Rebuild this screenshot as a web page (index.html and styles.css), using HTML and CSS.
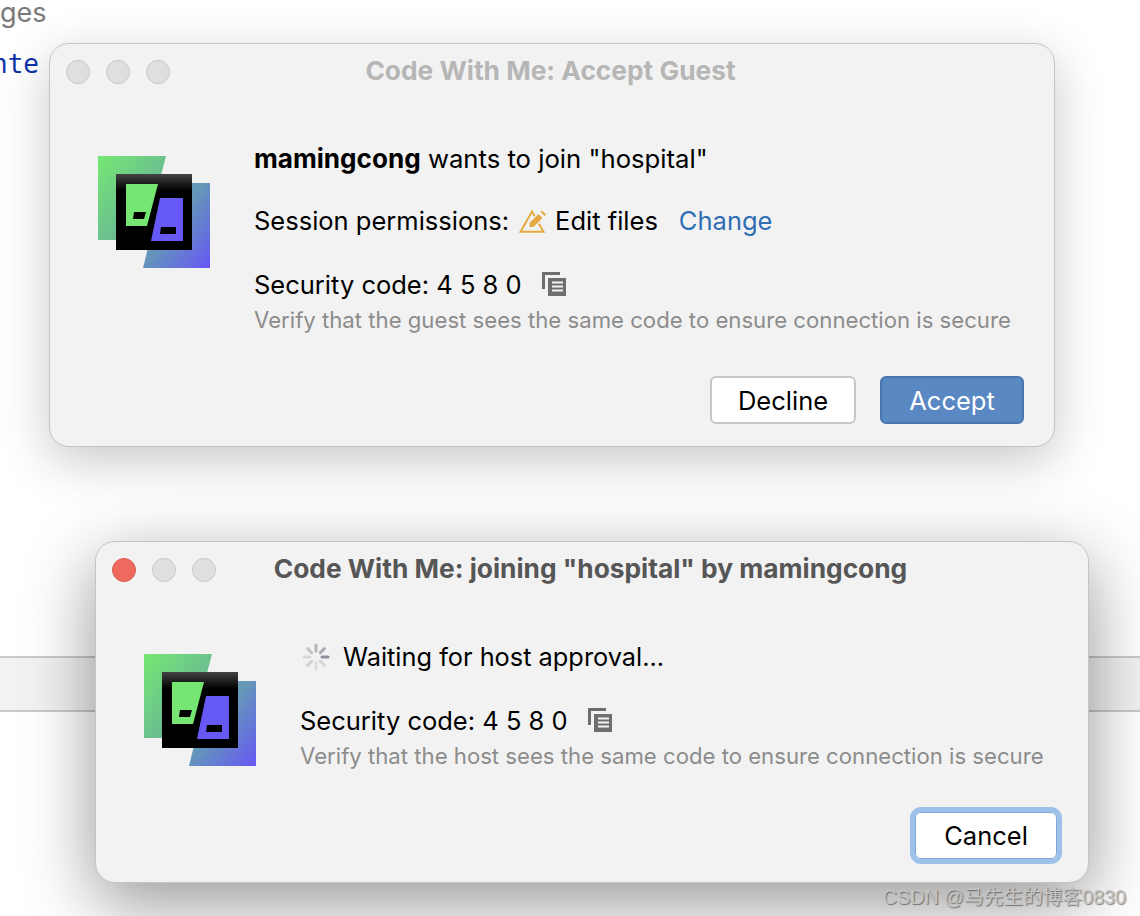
FILE: index.html
```html
<!DOCTYPE html>
<html lang="en">
<head>
  <meta charset="UTF-8" />
  <meta name="viewport" content="width=device-width, initial-scale=1" />
  <title>Code With Me</title>
  <link rel="stylesheet" href="styles.css">
</head>
<body>
  <svg width="0" height="0" class="defs">
    <defs>
      <linearGradient id="green-grad" x1="0" y1="0" x2="1" y2="1">
        <stop offset="0" stop-color="#76e873" />
        <stop offset="0.5" stop-color="#6cc48c" />
        <stop offset="1" stop-color="#5f9ea6" />
      </linearGradient>
      <linearGradient id="blue-grad" x1="0" y1="0" x2="1" y2="1">
        <stop offset="0" stop-color="#60a8a8" />
        <stop offset="0.45" stop-color="#6498b8" />
        <stop offset="1" stop-color="#6657f5" />
      </linearGradient>
      <linearGradient id="black-grad" x1="0" y1="0" x2="0" y2="1">
        <stop offset="0" stop-color="#444" />
        <stop offset="0.22" stop-color="#000" />
      </linearGradient>
      <symbol id="cwm-logo" viewBox="0 0 112 112">
        <polygon points="0,0 68,0 46,84 0,84" fill="url(#green-grad)" />
        <polygon points="66,27 112,27 112,112 45,112" fill="url(#blue-grad)" />
        <rect x="18" y="18" width="76" height="76" fill="url(#black-grad)" />
        <polygon points="28,28 60,28 49,70 28,70" fill="#76e673" />
        <polygon points="36,56 48,56 46,63 35,63" fill="#000" />
        <polygon points="62,42 85,42 85,85 53,85" fill="#6659f5" />
        <polygon points="63,71 78,71 78,78 62,78" fill="#000" />
      </symbol>
      <symbol id="copy-icon" viewBox="0 0 26 26">
        <path d="M1 1h18v3H4v14H1z" fill="#6e6e6e" />
        <path d="M7 7h18v18H7z" fill="#6e6e6e" />
        <path d="M11 11.500h11M11 15.500h11M11 19.500h11" stroke="#f2f2f2" stroke-width="2" fill="none" />
      </symbol>
    </defs>
  </svg>

  <div class="backdrop-text gray-text">ges</div>
  <div class="backdrop-text code-text"><span>nte</span></div>
  <div class="table-strip"></div>

  <!-- Accept dialog -->
  <section class="window window-accept">
    <div class="titlebar">
      <div class="lights">
        <span class="light"></span>
        <span class="light"></span>
        <span class="light"></span>
      </div>
      <div class="title title-inactive">Code With Me: Accept Guest</div>
    </div>
    <div class="window-body">
      <svg class="logo"><use href="#cwm-logo" /></svg>
      <div class="content">
        <p class="line first-line"><b>mamingcong</b> wants to join "hospital"</p>
        <p class="line perm-line">
          <span>Session permissions:</span>
          <svg class="edit-icon" viewBox="0 0 28 24" width="28" height="24">
            <path d="M1.500 22.800L13 2.500l11.500 20.300z" fill="none" stroke="#e5a93f" stroke-width="2" />
            <path d="M9 19.500v-6L20 3l6 5.500-11 11z" fill="#f2f2f2" />
            <path d="M10.500 18v-4L19.500 5l4 4-9 9z" fill="#e5a93f" />
            <path d="M21.500 3l1.500-1.500 4 4-1.500 1.500z" fill="#e5a93f" />
          </svg>
          <span>Edit files</span>
          <a class="link">Change</a>
        </p>
        <p class="line code-line">
          <span>Security code: 4 5 8 0</span>
          <svg class="copy"><use href="#copy-icon" /></svg>
        </p>
        <p class="hint">Verify that the guest sees the same code to ensure connection is secure</p>
      </div>
    </div>
    <div class="actions">
      <button class="btn">Decline</button>
      <button class="btn btn-primary">Accept</button>
    </div>
  </section>

  <!-- Joining dialog -->
  <section class="window window-join">
    <div class="titlebar">
      <div class="lights">
        <span class="light light-close"></span>
        <span class="light"></span>
        <span class="light"></span>
      </div>
      <div class="title">Code With Me: joining "hospital" by mamingcong</div>
    </div>
    <div class="window-body">
      <svg class="logo"><use href="#cwm-logo" /></svg>
      <div class="content">
        <p class="line wait-line">
          <svg class="spinner" viewBox="0 0 28 28" width="28" height="28">
            <g stroke-width="3" stroke-linecap="round" fill="none">
              <path d="M14 2v6" stroke="#b4b4bc" />
              <path d="M22.500 5.500l-4.200 4.200" stroke="#a8a8b2" />
              <path d="M26 14h-6" stroke="#8f8f9c" />
              <path d="M22.500 22.500l-4.200-4.200" stroke="#d4d4da" />
              <path d="M14 26v-6" stroke="#dcdce0" />
              <path d="M5.500 22.500l4.200-4.200" stroke="#d0d0d6" />
              <path d="M2 14h6" stroke="#d8d8dc" />
              <path d="M5.500 5.500l4.200 4.200" stroke="#c4c4ca" />
            </g>
          </svg>
          <span>Waiting for host approval...</span>
        </p>
        <p class="line code-line">
          <span>Security code: 4 5 8 0</span>
          <svg class="copy"><use href="#copy-icon" /></svg>
        </p>
        <p class="hint">Verify that the host sees the same code to ensure connection is secure</p>
      </div>
    </div>
    <div class="actions">
      <button class="btn btn-focus">Cancel</button>
    </div>
  </section>

  <div class="watermark">CSDN @马先生的博客0830</div>
</body>
</html>
```

FILE: styles.css
```css
html, body {
  margin: 0;
  height: 100%;
}

body {
  position: relative;
  width: 1140px;
  height: 916px;
  overflow: hidden;
  background: #fff;
  font-family: Inter, "Noto Sans", sans-serif;
  color: #000;
}

.defs {
  position: absolute;
}

/* bits of the editor behind the dialogs */
.backdrop-text {
  position: absolute;
  left: 0;
  white-space: nowrap;
}

.gray-text {
  top: -3px;
  font-size: 27px;
  line-height: 32px;
  color: #7a7a7a;
}

.code-text {
  top: 46px;
  width: 39px;
  display: flex;
  justify-content: flex-end;
  overflow: hidden;
  font-family: "DejaVu Sans Mono", monospace;
  font-size: 26px;
  line-height: 36px;
  color: #0b33a8;
}

.table-strip {
  position: absolute;
  left: 0;
  right: 0;
  top: 656px;
  height: 52px;
  background: #f2f2f2;
  border-top: 2px solid #c9c9c9;
  border-bottom: 2px solid #c9c9c9;
}

.window {
  position: absolute;
  display: flex;
  flex-direction: column;
  box-sizing: border-box;
  background: #f2f2f2;
  border: 1px solid #c4c4c4;
  border-radius: 20px;
}

.window-accept {
  left: 49px;
  top: 43px;
  width: 1006px;
  height: 404px;
  box-shadow: 0 14px 50px rgba(0, 0, 0, 0.22);
}

.window-join {
  left: 95px;
  top: 541px;
  width: 994px;
  height: 342px;
  box-shadow: 0 20px 70px rgba(0, 0, 0, 0.42);
}

.titlebar {
  position: relative;
  height: 54px;
  flex: none;
}

.lights {
  position: absolute;
  left: 16px;
  top: 16px;
  display: flex;
  gap: 16px;
}

.light {
  box-sizing: border-box;
  width: 24px;
  height: 24px;
  border-radius: 50%;
  background: #dfdfdf;
  border: 1px solid #c8c8c8;
}

.light-close {
  background: #ee6a5f;
  border-color: #d85a50;
}

.title {
  padding-right: 3px;
  text-align: center;
  font-size: 26.3px;
  font-weight: 700;
  line-height: 54px;
  color: #565656;
}

.title-inactive {
  color: #b6b6b6;
}

.window-body {
  display: flex;
  flex: 1;
  min-height: 0;
  padding: 58px 0 0 48px;
}

.logo {
  width: 112px;
  height: 112px;
  flex: none;
}

.content {
  margin-left: 44px;
  margin-top: -12px;
}

.line {
  display: flex;
  align-items: center;
  margin: 0;
  font-size: 25.5px;
  line-height: 30px;
  white-space: nowrap;
}

.first-line {
  display: block;
  font-size: 25.7px;
}

.first-line b {
  font-size: 26.1px;
}

.perm-line {
  margin-top: 32px;
}

.code-line {
  margin-top: 34px;
}

.edit-icon {
  margin: 0 8px 0 10px;
}

.link {
  margin-left: 21px;
  color: #2f6db5;
}

.copy {
  width: 26px;
  height: 26px;
  margin-left: 19px;
  margin-top: -3px;
}

.hint {
  margin: 6px 0 0;
  font-size: 22.16px;
  line-height: 28px;
  color: #8c8c8c;
  white-space: nowrap;
}

.spinner {
  margin: 0 13px 0 2px;
}

.wait-line {
  font-size: 25.35px;
}

.actions {
  display: flex;
  justify-content: flex-end;
  gap: 24px;
  padding: 0 30px 22px 0;
}

.btn {
  box-sizing: border-box;
  width: 146px;
  height: 48px;
  padding: 0;
  background: #fff;
  border: 2px solid #c6c6c6;
  border-radius: 6px;
  font-family: inherit;
  font-size: 25.5px;
  color: #000;
}

.btn-primary {
  width: 144px;
  background: #5a88c3;
  border-color: #4a76ae;
  color: #fff;
}

.btn-focus {
  width: 142px;
  height: 47px;
  border: 1px solid #7fa8d8;
  outline: 5px solid #9ec1ea;
  outline-offset: 0;
}

.window-join .actions {
  padding: 0 31px 23px 0;
}

.watermark {
  position: absolute;
  right: 14px;
  bottom: 7px;
  font-family: "Liberation Sans", "Noto Sans CJK SC", sans-serif;
  font-size: 19.7px;
  line-height: 24px;
  color: #c4c4c4;
  text-shadow: 1px 1px 1px rgba(0, 0, 0, 0.45);
}
```
